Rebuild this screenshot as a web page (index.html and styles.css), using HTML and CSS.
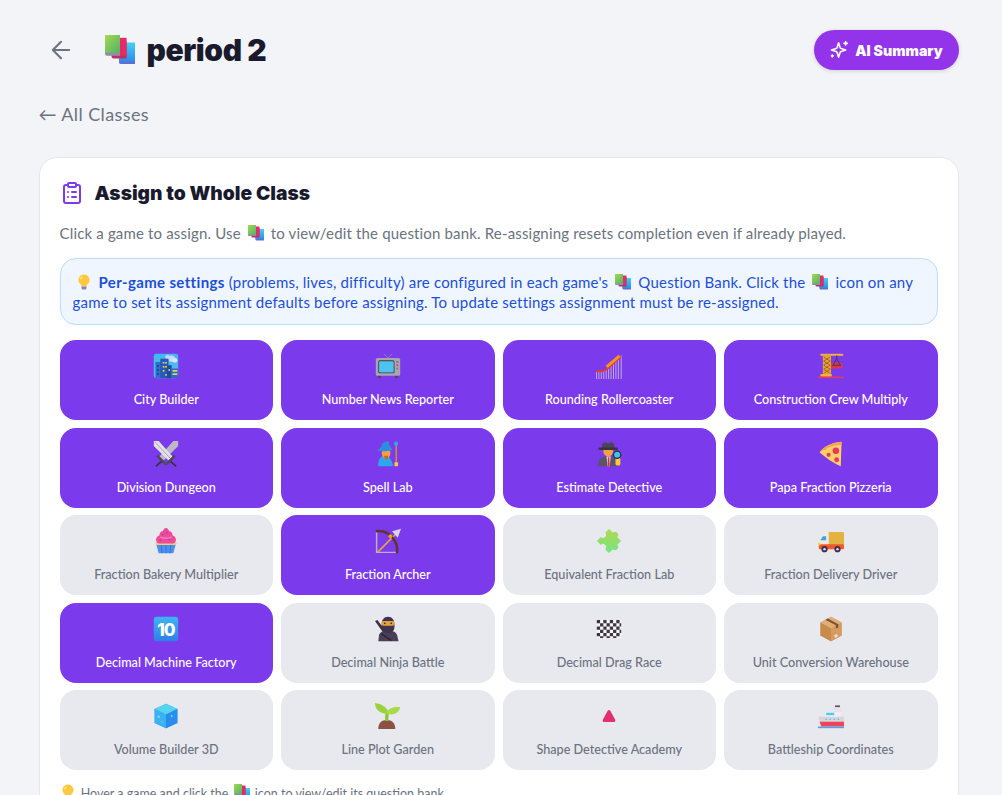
FILE: index.html
```html
<!DOCTYPE html>
<html lang="en">
<head>
<meta charset="utf-8">
<title>period 2</title>
<link rel="stylesheet" href="styles.css">
</head>
<body>
<svg class="defs" aria-hidden="true">
  <defs>
    <linearGradient id="gGreen" x1="0" y1="0" x2="1" y2="1"><stop offset="0" stop-color="#a6d84f"/><stop offset="1" stop-color="#4fb36a"/></linearGradient>
    <linearGradient id="gBlue" x1="0" y1="0" x2="0" y2="1"><stop offset="0" stop-color="#45d0f5"/><stop offset="1" stop-color="#2a8ee8"/></linearGradient>
    <linearGradient id="gCity" x1="0" y1="0" x2="0" y2="1"><stop offset="0" stop-color="#3dbbf0"/><stop offset="1" stop-color="#63b8ea"/></linearGradient>
    <linearGradient id="gPuzzle" x1="0" y1="0" x2="1" y2="1"><stop offset="0" stop-color="#b6d84a"/><stop offset="1" stop-color="#6fe68a"/></linearGradient>
    <linearGradient id="gBox" x1="0" y1="0" x2="1" y2="1"><stop offset="0" stop-color="#d9a56b"/><stop offset="1" stop-color="#b57a42"/></linearGradient>
    <linearGradient id="gTen" x1="0" y1="0" x2="0" y2="1"><stop offset="0" stop-color="#3fb4f2"/><stop offset="1" stop-color="#2f7fe6"/></linearGradient>
    <symbol id="i-books" viewBox="0 0 32 32">
      <path fill="#5b6fd6" d="M15 13h17v18H17a2 2 0 0 1-2-2z"/>
      <rect x="15" y="8" width="17" height="20" fill="url(#gBlue)"/>
      <path fill="#c42a63" d="M7 6h16v19H9a2 2 0 0 1-2-2z"/>
      <rect x="9" y="3" width="14" height="19" fill="#e52b66"/>
      <path fill="#8b8fa8" d="M0 1h16v21H2a2 2 0 0 1-2-2z"/>
      <path fill="url(#gGreen)" d="M0 0h16v19H2a2 2 0 0 0-2 0z"/>
    </symbol>
    <symbol id="i-bulb" viewBox="0 0 32 32">
      <path fill="#ffc83d" d="M16 1a11 11 0 0 0-7 19.500c1.500 1.300 2 2.800 2 4.500h10c0-1.700.5-3.200 2-4.500A11 11 0 0 0 16 1z"/>
      <path fill="#ffe48a" d="M11 5a7 7 0 0 0-3 6l4-1c0-2 .5-3.500 2-5z"/>
      <path fill="#8d7fb5" d="M11 25h10v3a3 3 0 0 1-3 3h-4a3 3 0 0 1-3-3z"/>
    </symbol>
    <symbol id="i-city" viewBox="0 0 32 32">
      <rect x="1" y="1" width="30" height="30" rx="3" fill="url(#gCity)"/>
      <circle cx="23" cy="7" r="4" fill="#cfd6f7"/><circle cx="18" cy="5" r="3" fill="#bcd9f7"/><circle cx="27" cy="9" r="3" fill="#dfe3fa"/>
      <rect x="3" y="11" width="7" height="20" fill="#2e6fcb"/>
      <rect x="9" y="7" width="10" height="24" fill="#2659b8"/>
      <rect x="17" y="15" width="6" height="16" fill="#1f4c9c"/>
      <rect x="22" y="19" width="9" height="12" rx="1" fill="#2b6ac9"/>
      <g fill="#f6d64a"><rect x="12" y="11" width="2" height="2"/><rect x="15" y="11" width="2" height="2"/><rect x="12" y="16" width="2" height="2"/><rect x="15" y="16" width="2" height="2"/><rect x="12" y="21" width="2" height="2"/><rect x="19" y="20" width="2" height="2"/><rect x="15" y="26" width="2" height="2"/><rect x="24" y="21" width="6" height="2"/><rect x="24" y="25" width="6" height="2"/></g>
      <g fill="#103a80"><rect x="5" y="15" width="2" height="2"/><rect x="5" y="20" width="2" height="2"/><rect x="5" y="25" width="2" height="2"/></g>
    </symbol>
    <symbol id="i-tv" viewBox="0 0 32 32">
      <path d="M16 6 11 1M16 6l5-5" stroke="#8f8c99" stroke-width="1.200" fill="none"/>
      <rect x="4" y="26" width="3" height="5" fill="#4a4650"/><rect x="25" y="26" width="3" height="5" fill="#4a4650"/>
      <rect x="1" y="6" width="30" height="22" rx="2" fill="#a9a4ae"/>
      <rect x="4" y="9" width="20" height="16" rx="2" fill="#3d3b45"/>
      <rect x="5" y="10" width="18" height="14" rx="1.500" fill="#4cc3f0"/>
      <rect x="26" y="10" width="3" height="2" fill="#7f7a88"/><circle cx="27.500" cy="15" r="1.200" fill="#e5395f"/><circle cx="27.500" cy="19" r="1.200" fill="#7f7a88"/>
    </symbol>
    <symbol id="i-coaster" viewBox="0 0 32 32">
      <g stroke="#c9b9e2" stroke-width="1.100"><path d="M.6 23v9M3.500 23v9M6.500 23v9M9.500 22v10M12.500 20v12M15.500 17v15M18.500 15v17M21.500 12v20M24.500 9v23M27.500 7v25M31 3v29"/></g>
      <path d="M0 22.500h7c3 0 5-1 8-4L31 4" stroke="#d8402f" stroke-width="2.400" fill="none"/>
      <path d="M13 17 29 3.500" stroke="#f7941d" stroke-width="3.600" fill="none"/>
    </symbol>
    <symbol id="i-crane" viewBox="0 0 32 32">
      <rect x="3" y="1" width="28" height="2.400" fill="#f2b23c"/>
      <rect x="6" y="3" width="10" height="26" fill="#e8a532"/>
      <path d="M7 5l8 5-8 5 8 5-8 5M15 5 7 10l8 5-8 5 8 5" stroke="#8d5a2b" stroke-width="1" fill="none"/>
      <rect x="3" y="26" width="14" height="3" fill="#f2b23c"/>
      <rect y="29" width="32" height="2" fill="#e5395f"/>
      <rect x="16" y="12" width="14" height="7" fill="#d8374f"/>
      <path d="M23 3v4M23 7l-5 9M23 7l5 9M19 15h8" stroke="#4b3a3a" stroke-width="1.200" fill="none"/>
    </symbol>
    <symbol id="i-swords" viewBox="0 0 32 32">
      <path d="M31 0h-6L8 19l5 5L31 6z" fill="#bdb9c4"/>
      <path d="M1 0h6l17 19-5 5L1 6z" fill="#e2dfe6"/>
      <path d="M2 1l20 21" stroke="#9e9aa6" stroke-width="1"/>
      <path d="M4 19l2-2 11 11-2 2zM28 19l-2-2-11 11 2 2z" fill="#4d4854"/>
      <path d="M10 24l-7 6 1 2 7-6zM22 24l7 6-1 2-7-6z" fill="#37333d"/>
    </symbol>
    <symbol id="i-mage" viewBox="0 0 32 32">
      <g transform="translate(3 0) scale(.82 1)">
        <circle cx="28" cy="3.500" r="3" fill="#2fa7ec"/>
        <rect x="27" y="6" width="2.400" height="22" fill="#d08a2c"/>
        <rect x="25.500" y="26" width="5.500" height="5" rx="1" fill="#ffc83d"/>
        <path d="M1 31c0-9 4-13 10-13s10 4 13 13z" fill="#2fa7ec"/>
        <circle cx="13" cy="15" r="6.500" fill="#f59e42"/>
        <path d="M10 18c0 3 1.500 5 3 5s3-2 3-5z" fill="#b96f2a"/>
        <path d="M0 11c3-1 5-2 7-7 2-3 8-5 11-3l-1 3 6 7c-5 1-18 3-23 0z" fill="#2b8fdc"/>
      </g>
    </symbol>
    <symbol id="i-detective" viewBox="0 0 32 32">
      <path d="M2 31l2-8c1-3 5-4 11-4s9 2 10 5l2 7z" fill="#5a5468"/>
      <path d="M13 19h5l-1 12h-3z" fill="#f2f0f5"/><path d="M14.500 20h2l.5 11h-3z" fill="#d23352"/>
      <circle cx="15" cy="13" r="6" fill="#f2a33a"/>
      <rect x="24" y="20" width="6" height="10" rx="2" fill="#ffc83d"/>
      <path d="M7 9l1-6c2-2 5-1 7 0 2-1 5-2 7 0l1 6z" fill="#4b4556"/>
      <rect x="3" y="8" width="24" height="3" rx="1.500" fill="#39343f"/>
      <circle cx="26" cy="17" r="4.500" fill="#3cc3ec" stroke="#2c2a33" stroke-width="1.500"/>
    </symbol>
    <symbol id="i-pizza" viewBox="0 0 32 32">
      <path d="M29 1C16 2 6 8 2 14c6 5 15 12 26 17z" fill="#ffd064"/>
      <path d="M29 1C16 2 6 8 2 14c0 0 2-3 7-3 3-3 10-6 20-6z" fill="#f4a25c"/>
      <circle cx="22" cy="12" r="4" fill="#e5395f"/><circle cx="13" cy="17" r="2.600" fill="#e5395f"/><circle cx="23" cy="23" r="3" fill="#e5395f"/>
    </symbol>
    <symbol id="i-cupcake" viewBox="0 0 32 32">
      <path d="M4 20h24l-3 11H7z" fill="#4a90f0"/>
      <path d="M10 20l1 11M16 20v11M22 20l-1 11" stroke="#2f6fd0" stroke-width="1"/>
      <rect x="3" y="17" width="26" height="4" rx="2" fill="#fbc57f"/>
      <path d="M16 0c2 0 3 2 4 4 3 0 4 3 4 5 3 1 5 4 4 7-1 3-3 3-5 3H9c-2 0-4 0-5-3-1-3 1-6 4-7 0-2 1-5 4-5 1-2 2-4 4-4z" fill="#ef4a9a"/>
      <path d="M9 11c3 2 11 2 14 0" stroke="#f985bd" stroke-width="1.500" fill="none"/>
      <g fill="#6a4fd8"><circle cx="12" cy="8" r=".9"/><circle cx="20" cy="14" r=".9"/><circle cx="9" cy="15" r=".9"/><circle cx="17" cy="6" r=".9"/></g>
    </symbol>
    <symbol id="i-bow" viewBox="0 0 32 32">
      <path d="M2 4v26h25" stroke="#b9b1ca" stroke-width="1.800" fill="none"/>
      <path d="M3 30 25 8" stroke="#e8a83c" stroke-width="2"/>
      <path d="M21 4 32 1l-4 11z" fill="#d8d4e6"/>
      <path d="M1 4c9-1 17 2 22 10 4 5 5 11 4 17" stroke="#5e3626" stroke-width="3" fill="none"/>
      <circle cx="19" cy="10" r="2.400" fill="#e8a032"/>
    </symbol>
    <symbol id="i-puzzle" viewBox="0 0 32 32">
      <path transform="rotate(45 16 16) translate(16 16) scale(1.500) translate(-16 -16)" d="M9 9h4.500a2.500 2.500 0 1 1 5 0H23v4.500a2.500 2.500 0 1 1 0 5V23h-4.500a2.500 2.500 0 1 0-5 0H9v-4.500a2.500 2.500 0 1 0 0-5z" fill="url(#gPuzzle)"/>
    </symbol>
    <symbol id="i-truck" viewBox="0 0 32 32">
      <rect x="13" y="5" width="19" height="17" rx="1.500" fill="#e2b243"/>
      <path d="M2 15l3-6c.5-1 1-1.500 2-1.500h6V24H1v-6z" fill="#f1e9e2"/>
      <path d="M3 15l3-5h4v5z" fill="#3aa3ea"/>
      <rect x="1" y="20" width="31" height="6" rx="1.500" fill="#f0592a"/>
      <rect y="18" width="3" height="3" fill="#ffd24d"/>
      <circle cx="8" cy="26" r="3.800" fill="#3d2d4f"/><circle cx="8" cy="26" r="1.500" fill="#e7e3ee"/>
      <circle cx="24" cy="26" r="3.800" fill="#3d2d4f"/><circle cx="24" cy="26" r="1.500" fill="#e7e3ee"/>
    </symbol>
    <symbol id="i-ninja" viewBox="0 0 32 32">
      <path d="M0 6l3-1 16 22-3 2z" fill="#3a3045"/>
      <path d="M4 31l1-8c1-3 4-5 11-5s10 2 11 5l2 8z" fill="#4a3f55"/>
      <path d="M8 12c0-7 3-11 8-11s8 4 8 11-3 9-8 9-8-2-8-9z" fill="#3f3350"/>
      <rect x="8" y="6" width="16" height="6" rx="2.500" fill="#e8a13a"/>
      <circle cx="12" cy="9" r="1" fill="#2a2230"/><circle cx="20" cy="9" r="1" fill="#2a2230"/>
      <path d="M8 22l12 8" stroke="#2a2230" stroke-width="1.500"/>
    </symbol>
    <symbol id="i-flag" viewBox="0 0 32 32">
      <rect x="1" y="5" width="30" height="22" fill="#f7f4fb"/>
      <path fill="#3d3540" d="M1 5h4v4H1zM9 5h4v4H9zM17 5h4v4h-4zM25 5h4v4h-4zM5 9h4v4H5zM13 9h4v4h-4zM21 9h4v4h-4zM29 9h2v4h-2zM1 13h4v4H1zM9 13h4v4H9zM17 13h4v4h-4zM25 13h4v4h-4zM5 17h4v4H5zM13 17h4v4h-4zM21 17h4v4h-4zM29 17h2v4h-2zM1 21h4v4H1zM9 21h4v4H9zM17 21h4v4h-4zM25 21h4v4h-4zM5 25h4v2H5zM13 25h4v2h-4zM21 25h4v2h-4z"/>
    </symbol>
    <symbol id="i-box" viewBox="0 0 32 32">
      <path d="M16 1l13 7v16l-13 7-13-7V8z" fill="url(#gBox)"/>
      <path d="M16 15v16L3 24V8z" fill="#c98a4e"/>
      <path d="M16 15 29 8v16l-13 7z" fill="#d79b60"/>
      <path d="M16 1l13 7-13 7L3 8z" fill="#e0ae75"/>
      <path d="M9 4.500l13 7v4l3-1.500v-4L12 3z" fill="#7a5234"/>
      <rect x="20" y="23" width="4" height="3" fill="#efe3d6" transform="rotate(-28 22 24)"/>
    </symbol>
    <symbol id="i-cube" viewBox="0 0 32 32">
      <path d="M16 1l14 6.500v17L16 31 2 24.500v-17z" fill="#2f9bf0"/>
      <path d="M16 1l14 6.500L16 14 2 7.500z" fill="#55d4ef"/>
      <path d="M16 14l14-6.500v17L16 31z" fill="#2a8cec"/>
      <path d="M2 7.500 16 14v17L2 24.500z" fill="#3ab1f0"/>
      <circle cx="7" cy="17" r="1.500" fill="#7fd4f5"/><circle cx="23" cy="16" r="1.200" fill="#7fd4f5"/><circle cx="11" cy="23" r="1" fill="#7fd4f5"/>
    </symbol>
    <symbol id="i-sprout" viewBox="0 0 32 32">
      <path d="M4 32c0-7 4-11 10.500-11S25 25 25 32z" fill="#8c5045"/>
      <path d="M12.500 22c0-5 0-8 1-11h4c-1 3-1 7-1 11z" fill="#8fc433"/>
      <path d="M17 13C15 5 8 1 0 0c0 8 6 14 17 13z" fill="#9bd23c"/>
      <path d="M14 13c1-6 8-9 17-8-1 7-8 11-17 8z" fill="#a8dc46"/>
    </symbol>
    <symbol id="i-triangle" viewBox="0 0 32 32">
      <path d="M16 8.500c.6 0 1.200.3 1.600 1l6 11c.5 1.200-.2 3-1.600 3H10c-1.400 0-2.100-1.800-1.600-3l6-11c.4-.7 1-1 1.600-1z" fill="#e0306f"/>
    </symbol>
    <symbol id="i-ship" viewBox="0 0 32 32">
      <path d="M21 3h6v5h-6z" fill="#56505e"/><path d="M19 5h10v6H19z" fill="#e9e2ec"/>
      <path d="M9 11h19v7H9z" fill="#f1edf3"/><rect x="10" y="12" width="10" height="3" fill="#43d0f0"/>
      <path d="M0 17h32v8H3z" fill="#d8d3dc"/>
      <g fill="#43c0ea"><circle cx="10" cy="20" r="1"/><circle cx="15" cy="20" r="1"/><circle cx="20" cy="20" r="1"/><circle cx="25" cy="20" r="1"/></g>
      <path d="M2 23h30v6H4z" fill="#ee4458"/>
      <rect y="29" width="32" height="2" fill="#5b9ae6"/>
    </symbol>
  </defs>
</svg>

<main class="page">
  <header class="topbar">
    <div class="title-group">
      <button class="back" aria-label="Back">
        <svg class="back-icon" viewBox="0 0 24 24" fill="none" stroke="currentColor" stroke-width="1.800" stroke-linecap="round" stroke-linejoin="round"><path d="M19 12H5M12 19l-7-7 7-7"/></svg>
      </button>
      <svg class="title-emoji"><use href="#i-books"/></svg>
      <h1 class="title">period 2</h1>
    </div>
    <button class="ai-btn">
      <svg class="ai-icon" viewBox="0 0 24 24" fill="none" stroke="currentColor" stroke-width="2" stroke-linecap="round" stroke-linejoin="round"><path d="M10 5.500 11.800 11a2 2 0 0 0 1.200 1.200l5.500 1.800-5.500 1.800a2 2 0 0 0-1.200 1.200L10 22.500 8.200 17A2 2 0 0 0 7 15.800L1.500 14 7 12.200A2 2 0 0 0 8.200 11z" transform="translate(1.500 -2)"/><path d="M20 2v4M22 4h-4M4 18v2M5 19H3"/></svg>
      AI Summary
    </button>
  </header>

  <a class="all-classes">← All Classes</a>

  <section class="card">
    <div class="card-head">
      <svg class="card-icon" viewBox="0 0 24 24" fill="none" stroke="currentColor" stroke-width="2" stroke-linecap="round" stroke-linejoin="round"><rect x="8" y="2" width="8" height="4" rx="1"/><path d="M16 4h2a2 2 0 0 1 2 2v14a2 2 0 0 1-2 2H6a2 2 0 0 1-2-2V6a2 2 0 0 1 2-2h2M12 11h4M12 16h4M8 11h.01M8 16h.01"/></svg>
      <h2 class="card-title">Assign to Whole Class</h2>
    </div>
    <p class="desc">Click a game to assign. Use <svg class="em"><use href="#i-books"/></svg> to view/edit the question bank. Re-assigning resets completion even if already played.</p>
    <div class="info">
      <svg class="em"><use href="#i-bulb"/></svg> <strong class="info-strong">Per-game settings</strong> (problems, lives, difficulty) are configured in each game's <svg class="em"><use href="#i-books"/></svg> Question Bank. Click the <svg class="em"><use href="#i-books"/></svg> icon on any game to set its assignment defaults before assigning. To update settings assignment must be re-assigned.
    </div>
    <div class="games">
      <button class="game on"><svg class="game-icon"><use href="#i-city"/></svg><span class="game-name">City Builder</span></button>
      <button class="game on"><svg class="game-icon"><use href="#i-tv"/></svg><span class="game-name">Number News Reporter</span></button>
      <button class="game on"><svg class="game-icon"><use href="#i-coaster"/></svg><span class="game-name">Rounding Rollercoaster</span></button>
      <button class="game on"><svg class="game-icon"><use href="#i-crane"/></svg><span class="game-name">Construction Crew Multiply</span></button>
      <button class="game on"><svg class="game-icon"><use href="#i-swords"/></svg><span class="game-name">Division Dungeon</span></button>
      <button class="game on"><svg class="game-icon"><use href="#i-mage"/></svg><span class="game-name">Spell Lab</span></button>
      <button class="game on"><svg class="game-icon"><use href="#i-detective"/></svg><span class="game-name">Estimate Detective</span></button>
      <button class="game on"><svg class="game-icon"><use href="#i-pizza"/></svg><span class="game-name">Papa Fraction Pizzeria</span></button>
      <button class="game"><svg class="game-icon"><use href="#i-cupcake"/></svg><span class="game-name">Fraction Bakery Multiplier</span></button>
      <button class="game on"><svg class="game-icon"><use href="#i-bow"/></svg><span class="game-name">Fraction Archer</span></button>
      <button class="game"><svg class="game-icon"><use href="#i-puzzle"/></svg><span class="game-name">Equivalent Fraction Lab</span></button>
      <button class="game"><svg class="game-icon"><use href="#i-truck"/></svg><span class="game-name">Fraction Delivery Driver</span></button>
      <button class="game on"><svg class="game-icon" viewBox="0 0 32 32"><rect x="1" y="1" width="30" height="30" rx="4" fill="url(#gTen)"/><text class="ten" x="16" y="24" text-anchor="middle">10</text></svg><span class="game-name">Decimal Machine Factory</span></button>
      <button class="game"><svg class="game-icon"><use href="#i-ninja"/></svg><span class="game-name">Decimal Ninja Battle</span></button>
      <button class="game"><svg class="game-icon"><use href="#i-flag"/></svg><span class="game-name">Decimal Drag Race</span></button>
      <button class="game"><svg class="game-icon"><use href="#i-box"/></svg><span class="game-name">Unit Conversion Warehouse</span></button>
      <button class="game"><svg class="game-icon"><use href="#i-cube"/></svg><span class="game-name">Volume Builder 3D</span></button>
      <button class="game"><svg class="game-icon"><use href="#i-sprout"/></svg><span class="game-name">Line Plot Garden</span></button>
      <button class="game"><svg class="game-icon"><use href="#i-triangle"/></svg><span class="game-name">Shape Detective Academy</span></button>
      <button class="game"><svg class="game-icon"><use href="#i-ship"/></svg><span class="game-name">Battleship Coordinates</span></button>
    </div>
    <p class="hint"><svg class="em hint-bulb"><use href="#i-bulb"/></svg> Hover a game and click the <svg class="em"><use href="#i-books"/></svg> icon to view/edit its question bank.</p>
  </section>
</main>
</body>
</html>
```

FILE: styles.css
```css
* { box-sizing: border-box; }
html, body { margin: 0; height: 100%; overflow: hidden; }
body { background: #f3f4f8; font-family: "Lato", "Noto Sans", sans-serif; color: #1a1a2e; }
.defs { position: absolute; width: 0; height: 0; }
.page { padding: 30px 43.500px 40px 38.500px; }
.topbar { display: flex; align-items: center; justify-content: space-between; height: 40px; }
.title-group { display: flex; align-items: center; }
.back { display: flex; align-items: center; justify-content: center; width: 44px; height: 40px; border: 0; padding: 0; background: none; color: #6b7280; }
.back-icon { width: 28px; height: 28px; }
.title-emoji { width: 30px; height: 30px; margin: 0 12px 0 22px; }
.title { margin: 0; font-family: "Inter", sans-serif; font-size: 30px; font-weight: 900; line-height: 40px; color: #1a1a2e; letter-spacing: -0.4px; }
.ai-btn { display: flex; align-items: center; gap: 6px; height: 40px; width: 145px; justify-content: center; padding: 0; border: 0; border-radius: 20px; background: #9333ea; color: #fff; font-family: "Inter", sans-serif; font-size: 14.200px; font-weight: 900; box-shadow: 0 1px 4px rgba(0,0,0,.15); }
.ai-icon { width: 20px; height: 20px; }
.all-classes { display: block; margin-top: 32px; font-size: 18px; line-height: 24px; letter-spacing: .4px; color: #6b7280; }
.card { margin-top: 31px; padding: 20px; background: #fff; border: 1px solid #e5e7eb; border-radius: 18px; }
.card-head { display: flex; align-items: center; gap: 11px; height: 30px; }
.card-icon { width: 24px; height: 24px; color: #7c3aed; }
.card-title { margin: 0; font-family: "Inter", sans-serif; font-size: 19.200px; font-weight: 900; color: #1a1a2e; }
.desc { margin: 15px 0 0; font-size: 15px; line-height: 20px; letter-spacing: .165px; color: #6b7280; }
.em { display: inline-block; width: 16px; height: 16px; vertical-align: -2px; margin: 0 3px; }
.info { margin-top: 15px; padding: 13px 12px; height: 67px; background: #eff6ff; border: 1px solid #bfdbfe; border-radius: 16px; font-size: 15px; line-height: 20px; letter-spacing: .2px; color: #1d4ed8; }
.info-strong { letter-spacing: .35px; }
.games { display: grid; grid-template-columns: repeat(4, 1fr); gap: 7.500px 8px; margin-top: 15px; }
.game { display: flex; flex-direction: column; align-items: center; height: 80px; padding: 13px 4px 0; border: 0; border-radius: 16px; background: #e8e9ee; color: #6b7280; font-family: inherit; }
.game.on { background: #7c3aed; color: #fff; }
.game-icon { width: 26px; height: 26px; }
.game-name { margin-top: 12px; font-size: 12.640px; line-height: 18px; font-weight: 500; }
.ten { font-family: "Inter", sans-serif; font-size: 21px; font-weight: 800; fill: #fff; letter-spacing: -1px; }
.hint { margin: 14px 0 0; font-size: 12.500px; line-height: 18px; color: #6b7280; }
.hint .em { margin: 0 2px; }
.hint .hint-bulb { margin-left: 0; }
```
